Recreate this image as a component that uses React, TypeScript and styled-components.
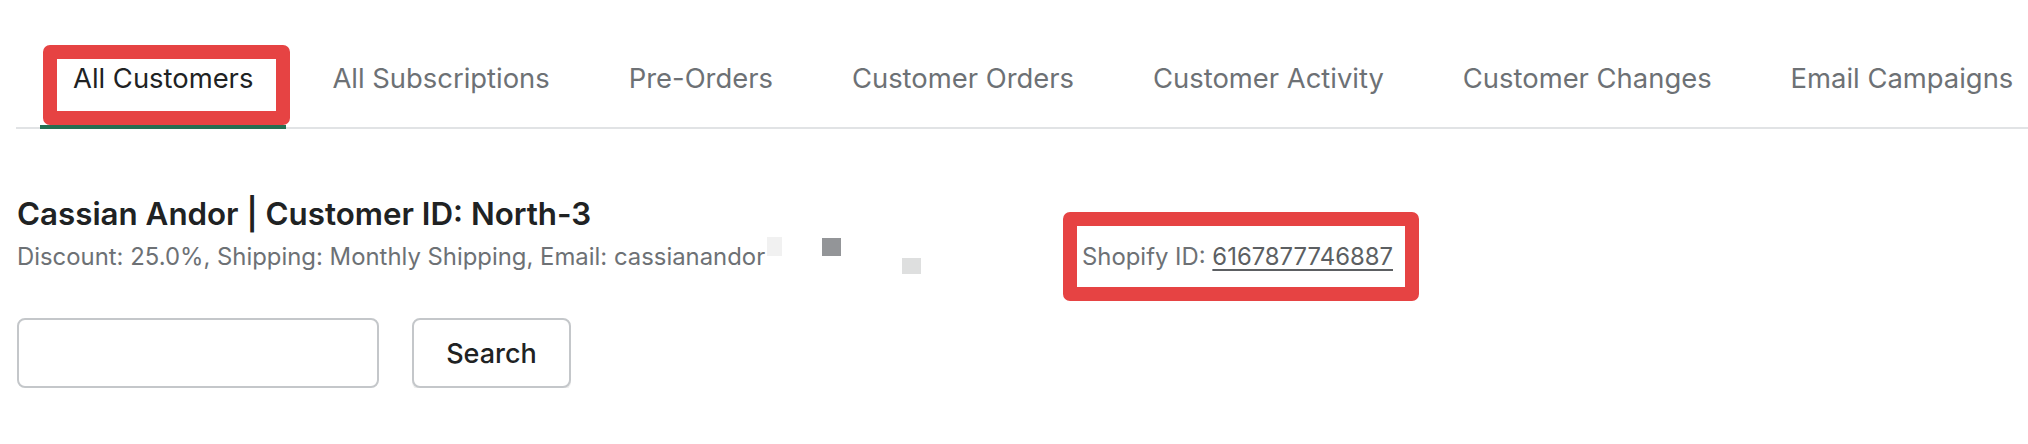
import React from "react";
import styled, { createGlobalStyle } from "styled-components";

const Global = createGlobalStyle`
  html, body { margin: 0; padding: 0; background: #ffffff; }
  body { font-family: Inter, "Noto Sans", "Liberation Sans", sans-serif; color: #202223; }
`;

const Page = styled.div`
  padding: 40px 0 0 16px;
`;

const TabList = styled.nav`
  display: flex;
  gap: 13px;
  padding-left: 24px;
  box-shadow: inset 0 -2px 0 #e1e3e5;
`;

const Tab = styled.div<{ $active?: boolean }>`
  position: relative;
  padding: 22px 33px 31px;
  font-size: 27.4px;
  line-height: 32px;
  white-space: nowrap;
  color: ${(p) => (p.$active ? "#202223" : "#6d7175")};
  border-bottom: 4px solid ${(p) => (p.$active ? "#246f52" : "transparent")};
`;

const Highlight = styled.span<{ $top: number; $left: number; $right: number; $bottom: number }>`
  position: absolute;
  top: ${(p) => p.$top}px;
  left: ${(p) => p.$left}px;
  right: ${(p) => p.$right}px;
  bottom: ${(p) => p.$bottom}px;
  border: 14px solid #e64343;
  border-radius: 7px;
  pointer-events: none;
`;

const Header = styled.section`
  margin-top: 67px;
  padding-left: 1px;
`;

const Title = styled.h1`
  margin: 0 0 10px;
  font-size: 31.3px;
  line-height: 36px;
  font-weight: 600;
  color: #202223;
`;

const Meta = styled.div`
  display: grid;
  grid-template-columns: 1065px auto;
  align-items: start;
  font-size: 23.88px;
  line-height: 30px;
  color: #6d7175;
`;

const Details = styled.div`
  display: flex;
  align-items: flex-start;
  white-space: nowrap;
`;

const Redacted = styled.span<{ $w: number; $h: number; $c: string; $ml: number; $mt: number }>`
  display: inline-block;
  flex: none;
  width: ${(p) => p.$w}px;
  height: ${(p) => p.$h}px;
  background: ${(p) => p.$c};
  margin-left: ${(p) => p.$ml}px;
  margin-top: ${(p) => p.$mt}px;
`;

const ShopifyId = styled.div`
  position: relative;
  justify-self: start;
  white-space: nowrap;
`;

const IdLink = styled.a`
  color: #5c5f62;
  text-decoration: underline;
  text-underline-offset: 4px;
  text-decoration-thickness: 2px;
`;

const SearchRow = styled.form`
  display: flex;
  gap: 33px;
  margin-top: 44px;
  padding-left: 1px;
`;

const Input = styled.input`
  width: 362px;
  height: 70px;
  box-sizing: border-box;
  border: 2px solid #c4c7ca;
  border-radius: 8px;
  background: #fff;
  font: inherit;
  font-size: 24px;
  padding: 0 14px;
`;

const Button = styled.button`
  width: 159px;
  height: 70px;
  box-sizing: border-box;
  border: 2px solid #c4c7ca;
  border-radius: 8px;
  background: #fff;
  box-shadow: 0 2px 0 rgba(0, 0, 0, 0.07);
  font-family: Inter, "Noto Sans", "Liberation Sans", sans-serif;
  font-size: 27px;
  font-weight: 500;
  color: #202223;
`;

const tabs = [
  "All Customers",
  "All Subscriptions",
  "Pre-Orders",
  "Customer Orders",
  "Customer Activity",
  "Customer Changes",
  "Email Campaigns",
];

export default function App() {
  return (
    <>
      <Global />
      <Page>
        <TabList>
          {tabs.map((t, i) => (
            <Tab key={t} $active={i === 0}>
              {t}
              {i === 0 && <Highlight $top={5} $left={3} $right={-4} $bottom={0} />}
            </Tab>
          ))}
        </TabList>
        <Header>
          <Title>Cassian Andor | Customer ID: North-3</Title>
          <Meta>
            <Details>
              Discount: 25.0%, Shipping: Monthly Shipping, Email: cassianandor
              <Redacted $w={15} $h={19} $c="#f1f1f1" $ml={2} $mt={-5} />
              <Redacted $w={19} $h={18} $c="#939598" $ml={40} $mt={-4} />
              <Redacted $w={19} $h={16} $c="#dedfdf" $ml={61} $mt={16} />
            </Details>
            <ShopifyId>
              Shopify ID: <IdLink href="#">6167877746887</IdLink>
              <Highlight $top={-30} $left={-19} $right={-26} $bottom={-29} />
            </ShopifyId>
          </Meta>
        </Header>
        <SearchRow onSubmit={(e) => e.preventDefault()}>
          <Input type="text" aria-label="Search" />
          <Button type="submit">Search</Button>
        </SearchRow>
      </Page>
    </>
  );
}
